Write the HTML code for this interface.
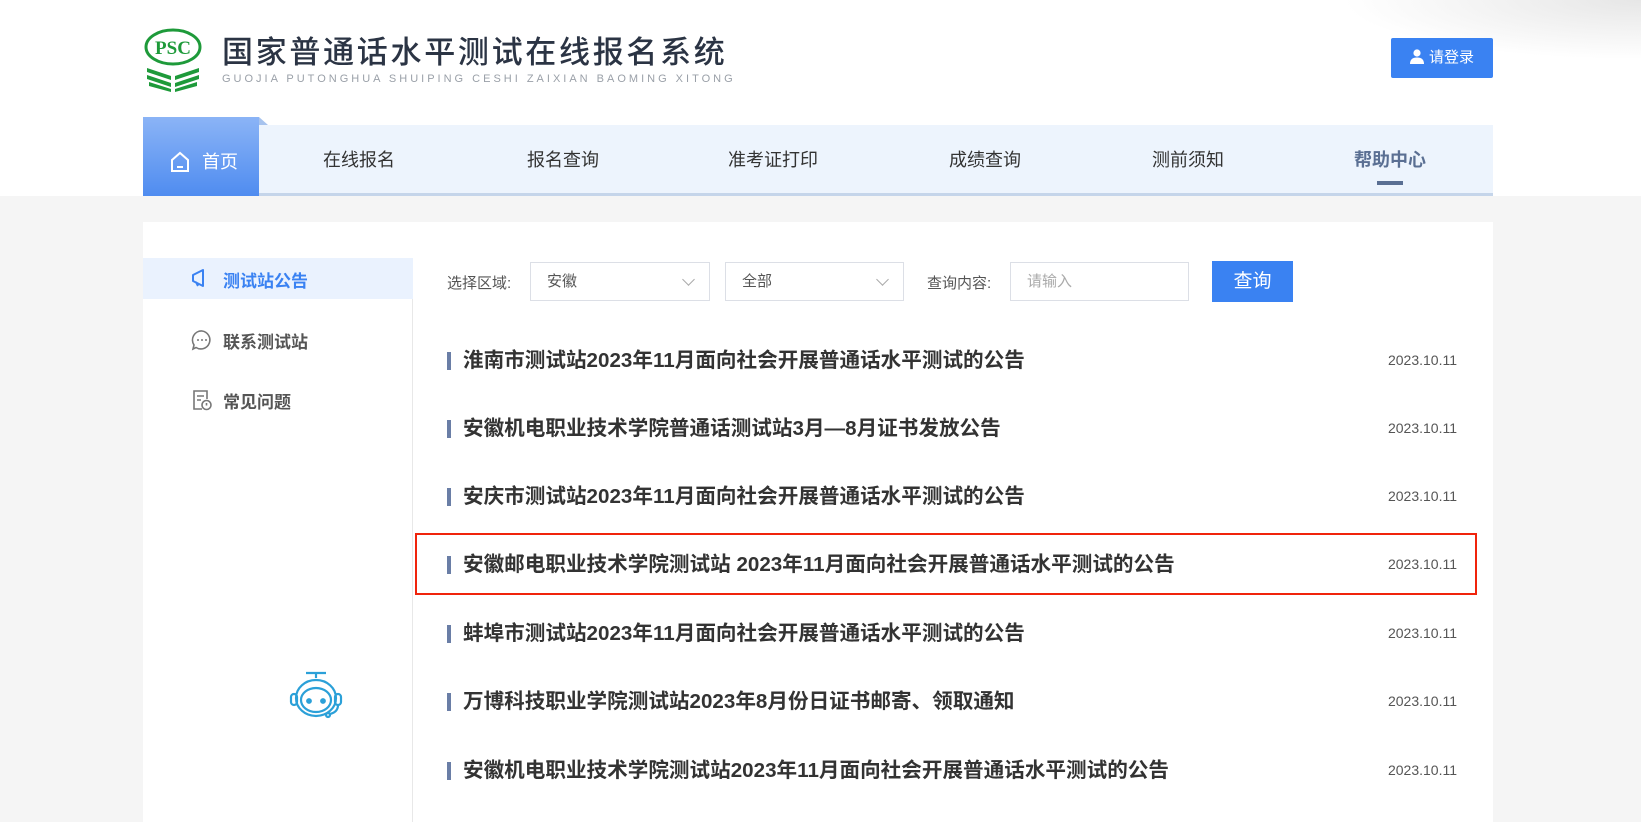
<!DOCTYPE html>
<html><head><meta charset="utf-8"><style>
*{margin:0;padding:0;box-sizing:border-box}
body{width:1641px;height:822px;overflow:hidden;background:#f5f5f5;font-family:"Liberation Sans","Noto Sans CJK SC",sans-serif;position:relative}
.top{position:absolute;left:0;top:0;width:1641px;height:196px;background:#fff}
.shade{position:absolute;right:0;top:0;width:300px;height:60px;background:radial-gradient(ellipse at 100% 0%,#e6e6e6 0%,rgba(255,255,255,0) 70%)}
.abs{position:absolute}
.title{left:222px;top:33px;font-size:31px;color:#2b3444;letter-spacing:2.7px;white-space:nowrap;font-weight:500;line-height:40px}
.sub{left:222px;top:73px;font-size:11px;color:#9aa0a8;letter-spacing:3px;white-space:nowrap}
.login{left:1391px;top:38px;width:102px;height:40px;background:#3a82f2;border-radius:2px;color:#fff;font-size:15px;line-height:40px;text-align:center}
.nav{left:143px;top:125px;width:1350px;height:71px;background:#edf4fd;border-bottom:3px solid #c5d5ea}
.home{left:143px;top:117px;width:116px;height:79px;background:linear-gradient(#8bb4f6,#4f8cf0);color:#fff;font-size:18px}
.home:after{content:"";position:absolute;right:-9px;top:0;border-left:9px solid #a7c3ee;border-top:8px solid transparent}
.ni{top:146px;font-size:18px;color:#333;transform:translateX(-50%);white-space:nowrap}
.card{left:143px;top:222px;width:1350px;height:600px;background:#fff}
.side{left:143px;top:258px;width:270px;height:564px;border-right:1px solid #e8e8e8}
.si{left:190px;font-size:17px;font-weight:bold;color:#555;white-space:nowrap}
.lbl{top:272px;font-size:15px;color:#555}
.box{top:262px;height:39px;border:1px solid #dcdfe6;font-size:15px;color:#555;line-height:37px;padding-left:16px}
.chev{position:absolute;right:16px;top:12px;width:9px;height:9px;border-right:1px solid #aaa;border-bottom:1px solid #aaa;transform:rotate(45deg)}
.btn{left:1212px;top:261px;width:81px;height:41px;background:#3a82f2;color:#fff;font-size:19px;line-height:41px;text-align:center}
.it{left:447px;width:1010px;height:30px}
.it b{position:absolute;left:0;top:6px;width:4px;height:18px;background:#6a7ea6}
.it span{position:absolute;left:16px;top:0;font-size:20.6px;font-weight:bold;color:#333;white-space:nowrap;line-height:30px}
.it i{position:absolute;right:0;top:6px;font-style:normal;font-size:14px;color:#555}
</style></head><body>
<div class="top"><div class="shade"></div></div>
<svg class="abs" style="left:143px;top:28px" width="60" height="64" viewBox="0 0 60 64">
<ellipse cx="30" cy="19" rx="27" ry="17" fill="none" stroke="#1e9a3a" stroke-width="3"/>
<text x="30" y="26" text-anchor="middle" font-family="Liberation Serif" font-weight="bold" font-size="19" fill="#1e9a3a">PSC</text>
<g fill="#1e9a3a"><path d="M4 40 L28 48 L28 52 L4 44Z M56 40 L32 48 L32 52 L56 44Z M4 47 L28 55 L28 59 L4 51Z M56 47 L32 55 L32 59 L56 51Z M6 54 L28 61 L28 64 L6 58Z M54 54 L32 61 L32 64 L54 58Z"/></g>
</svg>
<div class="abs title">国家普通话水平测试在线报名系统</div>
<div class="abs sub">GUOJIA PUTONGHUA SHUIPING CESHI ZAIXIAN BAOMING XITONG</div>
<div class="abs login"><svg width="14" height="15" viewBox="0 0 14 15" style="vertical-align:-2px;margin-right:5px"><circle cx="7" cy="4" r="3.6" fill="#fff"/><path d="M0 15 Q0 8.5 7 8.5 Q14 8.5 14 15Z" fill="#fff"/></svg>请登录</div>
<div class="abs nav"></div>
<div class="abs home"><svg class="abs" style="left:27px;top:34px" width="20" height="22" viewBox="0 0 20 22"><path d="M2 9 L10 2 L18 9 V20 H2Z" fill="none" stroke="#fff" stroke-width="2"/><path d="M7 16 H13" stroke="#fff" stroke-width="2"/></svg><span class="abs" style="left:59px;top:31px">首页</span></div>
<div class="abs ni" style="left:359px">在线报名</div>
<div class="abs ni" style="left:563px">报名查询</div>
<div class="abs ni" style="left:773px">准考证打印</div>
<div class="abs ni" style="left:985px">成绩查询</div>
<div class="abs ni" style="left:1188px">测前须知</div>
<div class="abs ni" style="left:1390px;font-weight:bold;color:#5a6f93">帮助中心</div>
<div class="abs" style="left:1377px;top:181px;width:26px;height:4px;background:#5a6f93"></div>
<div class="abs card"></div>
<div class="abs side"></div>
<div class="abs" style="left:143px;top:258px;width:270px;height:41px;background:#eaf2fe"></div>
<svg class="abs" style="left:191px;top:268px" width="22" height="20" viewBox="0 0 22 20"><path d="M2 7 L12 2 V18 L2 13Z M2 7 V13 M5 14 L7 18" fill="none" stroke="#3a82f2" stroke-width="2" stroke-linejoin="round"/></svg>
<div class="abs si" style="left:223px;top:267px;color:#3a82f2">测试站公告</div>
<svg class="abs" style="left:191px;top:329px" width="22" height="22" viewBox="0 0 22 22"><path d="M11 2 A9 9 0 1 1 5 18.5 L2 20 L3 16 A9 9 0 0 1 11 2Z" fill="none" stroke="#777" stroke-width="1.6"/><circle cx="7" cy="11" r="1" fill="#777"/><circle cx="11" cy="11" r="1" fill="#777"/><circle cx="15" cy="11" r="1" fill="#777"/></svg>
<div class="abs si" style="left:223px;top:328px">联系测试站</div>
<svg class="abs" style="left:191px;top:389px" width="22" height="22" viewBox="0 0 22 22"><path d="M11 20 H3 V2 H16 V10" fill="none" stroke="#777" stroke-width="1.6"/><path d="M6 7 H13 M6 11 H10" stroke="#777" stroke-width="1.6"/><circle cx="15.5" cy="16" r="4.5" fill="none" stroke="#777" stroke-width="1.6"/><path d="M15.5 14 V16.5" stroke="#777" stroke-width="1.6"/></svg>
<div class="abs si" style="left:223px;top:388px">常见问题</div>
<svg class="abs" style="left:286px;top:670px" width="60" height="52" viewBox="0 0 60 52" fill="none" stroke="#2ba0d8" stroke-width="2.2">
<path d="M20 3 H40 M30 3 V8"/><ellipse cx="30" cy="28" rx="20" ry="18"/><ellipse cx="30" cy="30" rx="15" ry="12"/>
<rect x="5" y="24" width="6" height="11" rx="3"/><rect x="49" y="24" width="6" height="11" rx="3"/>
<path d="M52 35 Q52 42 44 44"/><circle cx="42" cy="45" r="2"/>
<circle cx="23" cy="31" r="1.8" fill="#2ba0d8"/><circle cx="37" cy="31" r="1.8" fill="#2ba0d8"/></svg>
<div class="abs lbl" style="left:447px">选择区域:</div>
<div class="abs box" style="left:530px;width:180px">安徽<div class="chev"></div></div>
<div class="abs box" style="left:725px;width:179px">全部<div class="chev"></div></div>
<div class="abs lbl" style="left:927px">查询内容:</div>
<div class="abs box" style="left:1010px;width:179px;color:#aaa">请输入</div>
<div class="abs btn">查询</div>
<div class="abs it" style="top:346px"><b></b><span>淮南市测试站2023年11月面向社会开展普通话水平测试的公告</span><i>2023.10.11</i></div>
<div class="abs it" style="top:414px"><b></b><span>安徽机电职业技术学院普通话测试站3月—8月证书发放公告</span><i>2023.10.11</i></div>
<div class="abs it" style="top:482px"><b></b><span>安庆市测试站2023年11月面向社会开展普通话水平测试的公告</span><i>2023.10.11</i></div>
<div class="abs it" style="top:550px"><b></b><span>安徽邮电职业技术学院测试站 2023年11月面向社会开展普通话水平测试的公告</span><i>2023.10.11</i></div>
<div class="abs it" style="top:619px"><b></b><span>蚌埠市测试站2023年11月面向社会开展普通话水平测试的公告</span><i>2023.10.11</i></div>
<div class="abs it" style="top:687px"><b></b><span>万博科技职业学院测试站2023年8月份日证书邮寄、领取通知</span><i>2023.10.11</i></div>
<div class="abs it" style="top:756px"><b></b><span>安徽机电职业技术学院测试站2023年11月面向社会开展普通话水平测试的公告</span><i>2023.10.11</i></div>
<div class="abs" style="left:415px;top:533px;width:1062px;height:62px;border:2px solid #f0240c"></div>
</body></html>
